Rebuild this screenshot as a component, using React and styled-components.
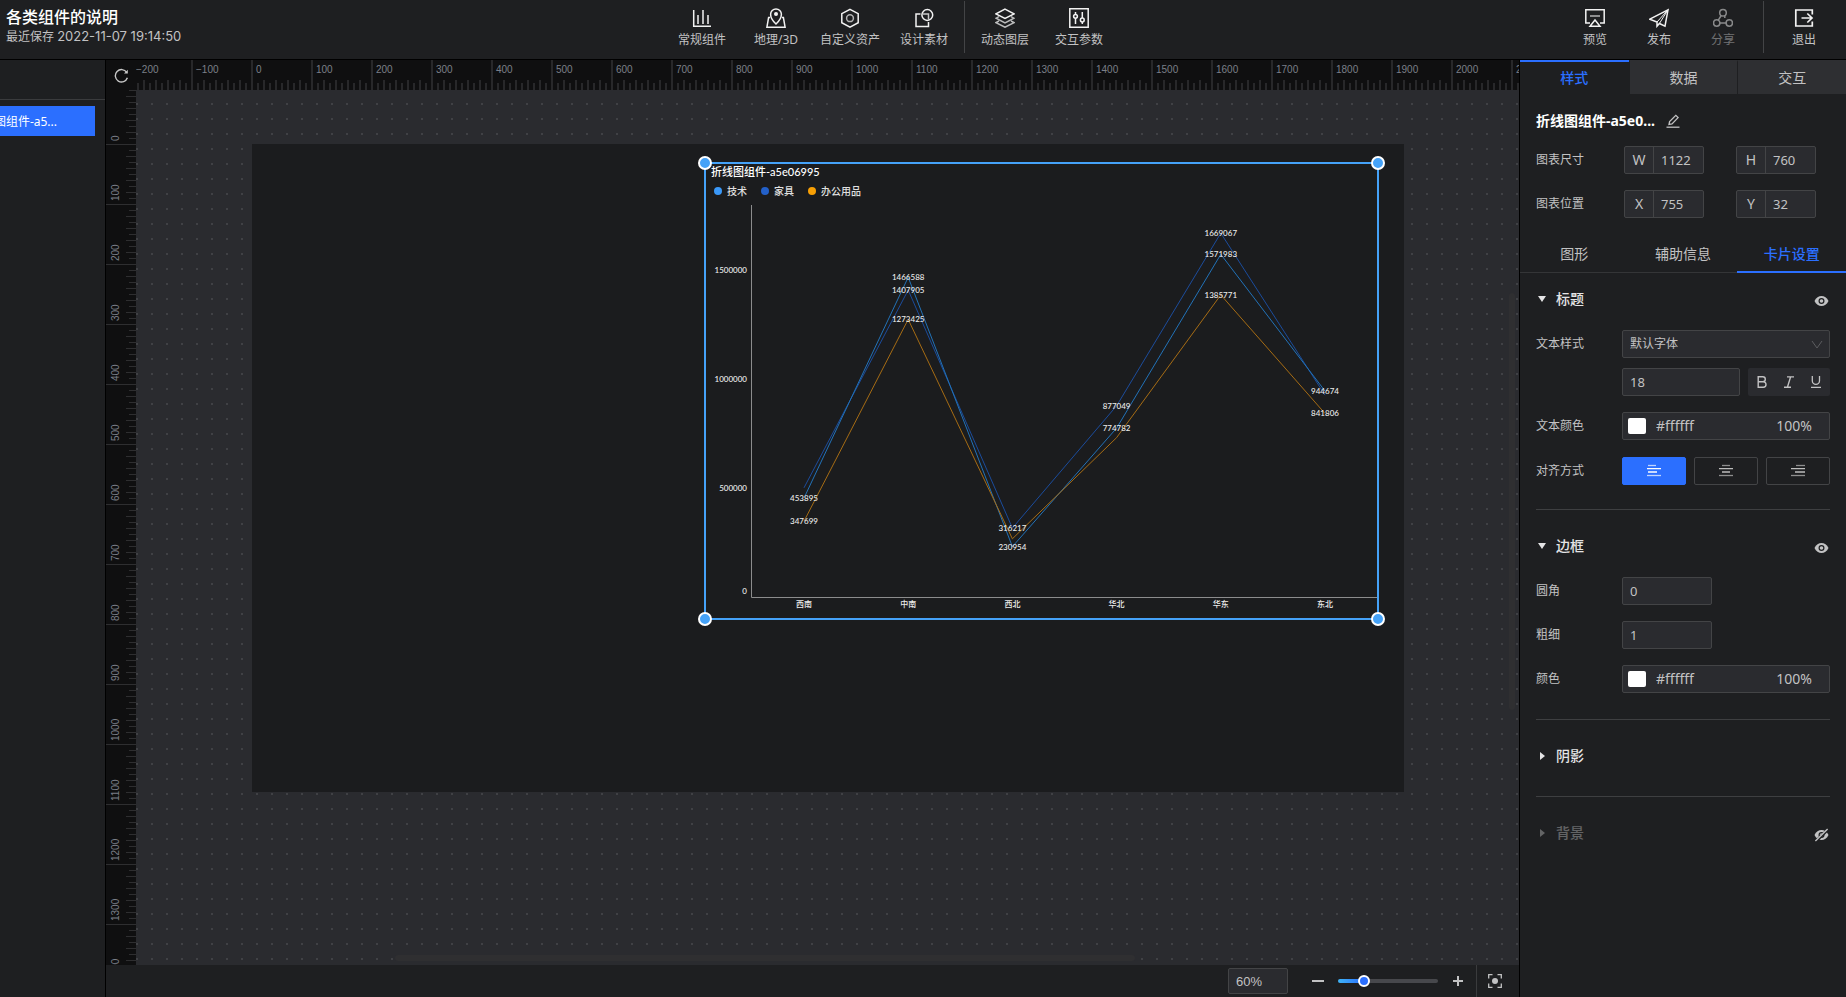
import React, { useEffect, useState } from 'react';
import styled, { createGlobalStyle, css } from 'styled-components';

const c = {
  panel: '#1e1f21',
  board: '#1b1c1e',
  canvas: '#2a2b2f',
  field: '#2a2b2f',
  ruler: '#0f0f10',
  tick: '#28282a',
  line: '#434446',
  text: '#c2c2c3',
  strong: '#e4e4e5',
  blue: '#2b6fff',
  select: '#45a2f8',
};

const GlobalStyle = createGlobalStyle`
  * { box-sizing: border-box; }
  body { margin: 0; background: ${c.panel}; color: ${c.text}; font: 12px/16px "Noto Sans", "Noto Sans CJK SC", sans-serif; }
  button, input, select { font: inherit; color: inherit; margin: 0; }
  button { background: none; border: 0; padding: 0; cursor: pointer; }
  svg { display: block; }
`;

const Page = styled.div`
  display: flex;
  flex-direction: column;
  height: 100vh;
  overflow: hidden;
`;

/* ---------- header ---------- */
const Header = styled.header`
  display: flex;
  justify-content: space-between;
  flex: none;
  height: 60px;
  padding-right: 10px;
  border-bottom: 1px solid #000;
`;
const Project = styled.div`
  width: 218px;
  padding: 7px 0 0 6px;
  white-space: nowrap;
`;
const ProjectName = styled.h1`
  margin: 0;
  font-size: 16px;
  line-height: 20px;
  font-weight: 500;
  color: #fff;
`;
const Saved = styled.p`
  margin: 0;
  line-height: 18px;
  time {
    font-family: Inter, sans-serif;
    font-size: 13px;
  }
`;
const Tools = styled.nav`
  display: flex;
  padding-top: 1px;
`;
const ToolButton = styled.button`
  display: flex;
  flex-direction: column;
  align-items: center;
  gap: 4px;
  width: ${(p) => p.$width}px;
  padding-top: 7px;
  opacity: ${(p) => (p.disabled ? 0.5 : 1)};
  white-space: nowrap;
  svg { color: #f2f2f2; }
`;
const Separator = styled.span`
  width: 1px;
  height: 52px;
  margin: 0 ${(p) => p.$gap}px;
  background: ${c.line};
`;

/* ---------- body ---------- */
const Body = styled.div`
  display: flex;
  flex: 1;
  min-height: 0;
`;
const Layers = styled.aside`
  flex: none;
  width: 106px;
  border-right: 1px solid #000;
`;
const LayersHead = styled.div`
  height: 40px;
  border-bottom: 1px solid #3a3b3d;
`;
const LayerItem = styled.button`
  display: flex;
  align-items: center;
  justify-content: flex-end;
  width: 95px;
  height: 30px;
  margin-top: 6px;
  padding: 2px 38px 0 0;
  overflow: hidden;
  background: ${c.blue};
  color: #fff;
  white-space: nowrap;
`;
const Editor = styled.main`
  display: grid;
  flex: 1;
  grid-template: 30px minmax(0, 1fr) 32px / 30px minmax(0, 1fr);
  min-width: 0;
`;
const Reset = styled.button`
  display: grid;
  place-items: center;
  background: ${c.ruler};
  color: #c8c8c8;
`;
const TopRuler = styled.div`
  overflow: hidden;
  background: ${c.ruler};
`;
const TopScale = styled.div`
  display: flex;
  margin-left: -5px;
`;
const TopCell = styled.span`
  flex: none;
  width: 60px;
  height: 30px;
  padding: 4px 0 0 3px;
  border-left: 2px solid ${c.tick};
  background:
    repeating-linear-gradient(90deg, transparent 0 10px, ${c.tick} 10px 12px) 0 100% / 100% 10px no-repeat,
    repeating-linear-gradient(90deg, transparent 0 4px, ${c.tick} 4px 6px, transparent 6px 12px) 0 100% / 100% 7px no-repeat;
  color: #7b7f88;
  font: 10px/12px "Liberation Sans", sans-serif;
`;
const SideRuler = styled.div`
  overflow: hidden;
  background: ${c.ruler};
`;
const SideScale = styled.div`
  display: flex;
  flex-direction: column;
  margin-top: -5px;
`;
const SideCell = styled.span`
  flex: none;
  width: 30px;
  height: 60px;
  padding: 3px 4px 0 0;
  writing-mode: vertical-rl;
  transform: rotate(180deg);
  border-top: 1px solid #2e2e30;
  background:
    repeating-linear-gradient(180deg, transparent 0 11px, #2e2e30 11px 12px) 0 0 / 10px 100% no-repeat,
    repeating-linear-gradient(180deg, transparent 0 5px, #2e2e30 5px 6px) 0 0 / 7px 100% no-repeat;
  color: #7b7f88;
  font: 10px/12px "Liberation Sans", sans-serif;
`;
const Workspace = styled.div`
  position: relative;
  overflow: hidden;
  background:
    linear-gradient(90deg, transparent 2px, ${c.canvas} 2px) 0 13px / 15px 15px,
    linear-gradient(#404145 2px, ${c.canvas} 2px) 0 13px / 15px 15px;
`;
const Board = styled.div`
  position: absolute;
  left: 116px;
  top: 54px;
  width: 1152px;
  height: 648px;
  background: ${c.board};
`;
const Widget = styled.section`
  position: absolute;
  left: 452px;
  top: 18px;
  width: 675px;
  height: 458px;
  border: 2px solid ${c.select};
`;
const Handle = styled.i`
  position: absolute;
  width: 14px;
  height: 14px;
  border: 2px solid #fff;
  border-radius: 50%;
  background: ${c.select};
  ${(p) => p.$y}: -8px;
  ${(p) => p.$x}: -8px;
`;
const ChartHead = styled.div`
  position: absolute;
  left: 5px;
  top: 0;
  font-family: Lato, "Noto Sans CJK SC", sans-serif;
`;
const ChartTitle = styled.h2`
  margin: 0;
  font-size: 11px;
  line-height: 16px;
  font-weight: 500;
  color: #fff;
`;
const Legend = styled.ul`
  display: flex;
  gap: 14px;
  margin: 4px 0 0;
  padding: 0 0 0 3px;
  list-style: none;
  font-size: 10px;
  line-height: 14px;
  font-weight: 500;
  color: #e0e0e0;
`;
const LegendItem = styled.li`
  display: flex;
  align-items: center;
  gap: 5px;
  &::before {
    content: '';
    width: 8px;
    height: 8px;
    border-radius: 50%;
    background: ${(p) => p.$color};
  }
`;
const Plot = styled.svg`
  width: 100%;
  height: 100%;
  overflow: visible;
  text {
    fill: #ececec;
    font: 500 8px Lato, "Noto Sans CJK SC", sans-serif;
    dominant-baseline: central;
  }
`;
const Thumb = styled.i`
  position: absolute;
  border-radius: 3px;
  background: #2f2f31;
  ${(p) => (p.$vertical
    ? css`right: 4px; top: 203px; width: 6px; height: 417px;`
    : css`left: 259px; bottom: 4px; width: 740px; height: 6px;`)}
`;
const Footer = styled.footer`
  grid-column: 1 / -1;
  display: flex;
  align-items: center;
  justify-content: flex-end;
  background: ${c.panel};
`;
const fieldBox = css`
  height: 28px;
  border: 1px solid ${c.line};
  border-radius: 2px;
  background: ${c.field};
`;
const ZoomInput = styled.input`
  ${fieldBox}
  width: 60px;
  height: 26px;
  margin-right: 12px;
  padding: 0 7px;
  font: 13px/16px "Liberation Sans", sans-serif;
`;
const FootButton = styled.button`
  display: grid;
  place-items: center;
  width: ${(p) => (p.$last ? 43 : 36)}px;
  height: 32px;
  padding-right: ${(p) => (p.$last ? 6 : 0)}px;
  border-left: ${(p) => (p.$last ? `1px solid #3a3b3d` : 0)};
`;
const Slider = styled.input`
  appearance: none;
  width: 100px;
  height: 4px;
  margin: 0 2px;
  border-radius: 2px;
  background: linear-gradient(90deg, #3fb4f6, ${c.blue} 26px, #47484c 26px);
  &::-webkit-slider-thumb {
    appearance: none;
    width: 12px;
    height: 12px;
    border: 2px solid #fff;
    border-radius: 50%;
    background: ${c.blue};
  }
`;

/* ---------- inspector ---------- */
const Inspector = styled.aside`
  flex: none;
  width: 327px;
  border-left: 1px solid #000;
  background: ${c.panel};
`;
const Tabs = styled.div`
  display: grid;
  grid-template-columns: repeat(3, 1fr);
`;
const MainTab = styled.button`
  height: 34px;
  border-top: 2px solid ${(p) => (p.$on ? c.blue : '#2e2f32')};
  border-left: ${(p) => (p.$on ? 0 : `1px solid ${c.panel}`)};
  background: ${(p) => (p.$on ? 'none' : '#2e2f32')};
  color: ${(p) => (p.$on ? c.blue : c.text)};
  font-size: 14px;
  font-weight: ${(p) => (p.$on ? 500 : 400)};
`;
const SubTabs = styled(Tabs)`
  margin-top: 18px;
  box-shadow: inset 0 -1px #343537;
`;
const SubTab = styled.button`
  height: 37px;
  border-bottom: 2px solid ${(p) => (p.$on ? c.blue : 'transparent')};
  color: ${(p) => (p.$on ? c.blue : c.text)};
  font-size: 14px;
  font-weight: ${(p) => (p.$on ? 500 : 400)};
`;
const Summary = styled.div`
  display: flex;
  flex-direction: column;
  gap: 16px;
  padding: 18px 16px 0;
`;
const NameRow = styled.div`
  display: flex;
  align-items: center;
  gap: 11px;
  height: 18px;
`;
const WidgetName = styled.h2`
  margin: 0;
  font-size: 14px;
  line-height: 20px;
  font-weight: 700;
  color: #fff;
`;
const PairRow = styled.div`
  display: grid;
  grid-template-columns: 88px 80px 80px;
  align-items: center;
  &> :last-child { margin-left: 32px; margin-right: -32px; }
`;
const PairField = styled.label`
  ${fieldBox}
  display: flex;
  span {
    width: 29px;
    border-right: 1px solid ${c.line};
    font-size: 14px;
    line-height: 26px;
    text-align: center;
  }
  input {
    flex: 1;
    min-width: 0;
    padding: 0 7px;
    border: 0;
    background: none;
    font-size: 13px;
  }
`;
const Section = styled.section`
  margin: 0 16px;
  padding: ${(p) => (p.$first ? 16 : 26)}px 0 ${(p) => p.$end}px;
  &:not(:last-child) { border-bottom: 1px solid #3e3f41; }
`;
const SectionHead = styled.div`
  display: flex;
  justify-content: space-between;
  align-items: flex-end;
  height: 20px;
`;
const Fold = styled.button`
  display: flex;
  align-items: center;
  gap: 8px;
  color: ${c.strong};
  font-size: 14px;
  line-height: 20px;
  font-weight: 500;
  opacity: ${(p) => (p.$dim ? 0.35 : 1)};
`;
const Rows = styled.div`
  display: flex;
  flex-direction: column;
  gap: 16px;
  padding-top: 21px;
`;
const Row = styled.div`
  display: grid;
  grid-template-columns: 86px minmax(0, 1fr);
  row-gap: 10px;
  align-items: center;
  min-height: ${(p) => (p.$tall ? 30 : 28)}px;
`;
const SelectWrap = styled.div`
  position: relative;
  svg { position: absolute; right: 7px; top: 9px; color: #5c5d60; pointer-events: none; }
`;
const Select = styled.select`
  ${fieldBox}
  appearance: none;
  display: block;
  width: 100%;
  padding: 0 7px;
`;
const TextInput = styled.input`
  ${fieldBox}
  width: ${(p) => (p.$fill ? 'auto' : '90px')};
  flex: ${(p) => (p.$fill ? 1 : 'none')};
  min-width: 0;
  padding: 0 7px;
  font-size: 13px;
`;
const FontRow = styled.div`
  grid-column: 2;
  display: flex;
  gap: 8px;
`;
const StyleGroup = styled.div`
  display: grid;
  grid-template-columns: repeat(3, 1fr);
  width: 82px;
  height: 28px;
  border-radius: 2px;
  background: ${c.field};
  button { display: grid; place-items: center; }
`;
const ColorField = styled.div`
  ${fieldBox}
  display: flex;
  align-items: center;
  gap: 10px;
  padding: 0 17px 0 5px;
  input {
    min-width: 0;
    padding: 0;
    border: 0;
    background: none;
    font-size: 14px;
    &:nth-of-type(1) { flex: 1; }
    &:nth-of-type(2) { width: 60px; text-align: right; }
  }
`;
const Swatch = styled.button`
  width: 18px;
  height: 16px;
  border-radius: 2px;
  background: #fff;
`;
const AlignGroup = styled.div`
  display: grid;
  grid-template-columns: repeat(3, 1fr);
  gap: 8px;
`;
const AlignButton = styled.button`
  display: grid;
  place-items: center;
  height: 28px;
  border: 1px solid ${(p) => (p.$on ? c.blue : c.line)};
  border-radius: 2px;
  background: ${(p) => (p.$on ? c.blue : 'none')};
  color: ${(p) => (p.$on ? '#fff' : '#bdbdbd')};
`;

/* ---------- icons ---------- */
const Icon = ({ size = 20, box = size, w = 1.5, children }) => (
  <svg width={size} height={size} viewBox={`0 0 ${box} ${box}`} fill="none" stroke="currentColor" strokeWidth={w} aria-hidden="true">
    {children}
  </svg>
);
const icons = {
  bars: <Icon><path d="M1.700 2v16.300H19" /><path d="M6 7v9M11 2v14M16 7v9" /></Icon>,
  map: <Icon><path d="M4 9.500H2.600L.9 19.200h18.200L17.400 9.500H16" /><path d="M10 16C6 12.400 4.600 9.700 4.600 6.300a5.400 5.400 0 0 1 10.800 0C15.400 9.700 14 12.400 10 16z" /><circle cx="10" cy="6" r="2" fill="currentColor" stroke="none" /></Icon>,
  hex: <Icon><path d="M10 1.300l8.200 4.400v9L10 19.100l-8.200-4.400v-9z" /><circle cx="10" cy="10.200" r="3.400" opacity=".7" /></Icon>,
  shapes: <Icon><path d="M6.500 6H2v12.500h12.500V14" /><circle cx="13.300" cy="7" r="5.400" /><path d="M9 6h5.500v5.500" opacity=".8" /></Icon>,
  layers: <Icon><path d="M10 1.200l9 4.600-9 4.600-9-4.600z" /><path d="M4 8.600l-3 1.600 9 4.600 9-4.600-3-1.600M4 13l-3 1.600 9 4.600 9-4.600-3-1.600" opacity=".75" /></Icon>,
  params: <Icon><path d="M.8.8h18.400v18.400H.8z" /><circle cx="6.500" cy="8.300" r="1.900" /><circle cx="13.300" cy="12" r="1.900" /><path d="M6.500 4v2.400M6.500 10.200V16M13.300 4v6.100M13.300 13.900V16" /></Icon>,
  preview: <Icon><path d="M5 15H.8V1.800h18.400V15H15" /><path d="M5 8h10" opacity=".7" /><path d="M10 12l5 6.300H5z" /></Icon>,
  send: <Icon><path d="M.8 11.200L19 1.800l-3 16.400-5.600-2.700-2.400 2.700V14z" /><path d="M19 1.800L8 14M19 1.800l-8.600 13.700" strokeWidth="1" /></Icon>,
  share: <Icon><circle cx="10" cy="4.700" r="3.300" /><circle cx="3.700" cy="15" r="3.200" /><circle cx="16.300" cy="15" r="3.200" /><path d="M8.200 7.500L5.300 12.200M11.800 7.500v2.500M7 15h6" /></Icon>,
  exit: <Icon w={1.7}><path d="M18.300 6.500V2H1.800v16h16.500v-4.500" /><path d="M7.500 10H18M13.300 5.500L18 10l-4.700 4.500" /></Icon>,
};
const ResetIcon = () => <Icon size={15} w={1.4}><path d="M12.700 4.300A6.200 6.200 0 1 0 13.400 9.800" /><path d="M13.800 1.800v3.700H10z" fill="currentColor" stroke="none" /></Icon>;
const PenIcon = () => <Icon size={14} w={1.3}><path d="M.5 13.200h13" /><path d="M3 10.500l.6-3L9.800 1.300l2.300 2.300L6 9.900z" /></Icon>;
const EyeIcon = ({ off }) => (
  <Icon size={16} box={16} w={1.2}>
    <path d="M.5 8C3.500 1.300 11.500 1.300 14.500 8c-3 6.700-11 6.700-14 0z" fill="currentColor" stroke="none" />
    <circle cx="7.500" cy="8" r="2.400" stroke={c.panel} />
    {off && <><path d="M1.200 15L14.200 2.300" stroke={c.panel} strokeWidth="3" /><path d="M1.400 13.900L13.600 2.100" strokeWidth="1.400" /></>}
  </Icon>
);
const Caret = ({ open }) => (
  <Icon size={12}><path d={open ? 'M2 3h8L6 9z' : 'M4 2v8l5-4z'} fill="currentColor" stroke="none" /></Icon>
);
const alignLines = {
  left: ['M1 1.500h8', 'M0 4.700h14M1 8h9', 'M0 11.500h14'],
  center: ['M3 1.500h8', 'M0 4.700h14M3 8h8', 'M0 11.500h14'],
  right: ['M5 1.500h9', 'M0 4.700h14M4 8h10', 'M0 11.500h14'],
};
const AlignIcon = ({ side }) => (
  <Icon size={14} w={1.3}>
    <path d={alignLines[side][0]} opacity=".7" /><path d={alignLines[side][1]} /><path d={alignLines[side][2]} opacity=".7" />
  </Icon>
);

/* ---------- data ---------- */
const series = [
  { name: '家具', color: '#2360c9', line: '#1b4c9c', values: [501000, 1407905, 316217, 877049, 1669067, 926000], labels: [0, 1, 1, 1, 1, 0] },
  { name: '技术', color: '#3a98f8', line: '#2272b8', values: [453895, 1466588, 230954, 774782, 1571983, 944674], labels: [1, 1, 1, 1, 1, 1] },
  { name: '办公用品', color: '#f79f05', line: '#a66c14', values: [347699, 1273425, 267000, 731000, 1385771, 841806], labels: [1, 1, 0, 0, 1, 1] },
];
const regions = ['西南', '中南', '西北', '华北', '华东', '东北'];
const px = (i) => 98 + i * 104.2;
const py = (v) => 433 - (v / 500000) * 109;

function Chart() {
  return (
    <>
      <Plot viewBox="0 0 671 454" role="img" aria-label="折线图">
        <path d="M45.500 41V433.500H671" fill="none" stroke="#8c8c8d" />
        {[500000, 1000000, 1500000].map((v) => <text key={v} x="41" y={py(v)} textAnchor="end">{v}</text>)}
        <text x="41" y="427" textAnchor="end">0</text>
        {regions.map((r, i) => <text key={r} x={px(i)} y="440" textAnchor="middle">{r}</text>)}
        {series.map((s) => (
          <polyline key={s.name} points={s.values.map((v, i) => `${px(i)},${py(v)}`).join(' ')} fill="none" stroke={s.line} strokeWidth="1" />
        ))}
        {series.map((s) => s.values.map((v, i) => s.labels[i] ? (
          <text key={v} x={px(i)} y={py(v)} textAnchor="middle">{v}</text>
        ) : null))}
      </Plot>
      <ChartHead>
        <ChartTitle>折线图组件-a5e06995</ChartTitle>
        <Legend>
          {[series[1], series[0], series[2]].map((s) => <LegendItem key={s.name} $color={s.color}>{s.name}</LegendItem>)}
        </Legend>
      </ChartHead>
    </>
  );
}

const Tool = ({ icon, label, width = 74, disabled }) => (
  <ToolButton $width={width} disabled={disabled}>{icons[icon]}{label}</ToolButton>
);
const Pair = ({ name, value }) => (
  <PairField><span>{name}</span><input defaultValue={value} /></PairField>
);
const Color = ({ id }) => (
  <ColorField>
    <Swatch aria-label="选择颜色" />
    <input id={id} defaultValue="#ffffff" />
    <input aria-label="不透明度" defaultValue="100%" />
  </ColorField>
);
const Group = ({ title, first, open, eye, dim, end = 30, children }) => (
  <Section $first={first} $end={end}>
    <SectionHead>
      <Fold $dim={dim} aria-expanded={!!open}><Caret open={open} />{title}</Fold>
      {eye && <button aria-label="显示或隐藏"><EyeIcon off={eye === 'off'} /></button>}
    </SectionHead>
    {open && <Rows>{children}</Rows>}
  </Section>
);

/* Ruler labels, one per 100 canvas units; only as many as the window can show. */
const marks = (from, count) => Array.from({ length: count }, (_, i) => String(from + i * 100).replace('-', '−'));
function useRulerCounts() {
  const read = () => [Math.ceil((window.innerWidth - 458) / 60), Math.ceil((window.innerHeight - 117) / 60)];
  const [counts, setCounts] = useState(read);
  useEffect(() => {
    const update = () => setCounts(read());
    window.addEventListener('resize', update);
    return () => window.removeEventListener('resize', update);
  }, []);
  return counts;
}

export default function App() {
  const [align, setAlign] = useState('left');
  const [across, down] = useRulerCounts();
  return (
    <Page>
      <GlobalStyle />
      <Header>
        <Project>
          <ProjectName>各类组件的说明</ProjectName>
          <Saved>最近保存 <time>2022-11-07 19:14:50</time></Saved>
        </Project>
        <Tools>
          <Tool icon="bars" label="常规组件" />
          <Tool icon="map" label="地理/3D" />
          <Tool icon="hex" label="自定义资产" />
          <Tool icon="shapes" label="设计素材" />
          <Separator $gap={3} />
          <Tool icon="layers" label="动态图层" />
          <Tool icon="params" label="交互参数" />
        </Tools>
        <Tools>
          <Tool icon="preview" label="预览" width={64} />
          <Tool icon="send" label="发布" width={64} />
          <Tool icon="share" label="分享" width={64} disabled />
          <Separator $gap={8} />
          <Tool icon="exit" label="退出" width={64} />
        </Tools>
      </Header>
      <Body>
        <Layers>
          <LayersHead />
          <LayerItem>折线图组件-a5...</LayerItem>
        </Layers>
        <Editor>
          <Reset aria-label="重置"><ResetIcon /></Reset>
          <TopRuler><TopScale>{marks(-200, across).map((m) => <TopCell key={m}>{m}</TopCell>)}</TopScale></TopRuler>
          <SideRuler><SideScale>{marks(0, down).map((m) => <SideCell key={m}>{m}</SideCell>)}</SideScale></SideRuler>
          <Workspace>
            <Board>
              <Widget>
                <Chart />
                <Handle $x="left" $y="top" />
                <Handle $x="right" $y="top" />
                <Handle $x="left" $y="bottom" />
                <Handle $x="right" $y="bottom" />
              </Widget>
            </Board>
            <Thumb $vertical />
            <Thumb />
          </Workspace>
          <Footer>
            <ZoomInput aria-label="缩放" defaultValue="60%" />
            <FootButton aria-label="缩小"><Icon size={12} w={2}><path d="M0 6h12" /></Icon></FootButton>
            <Slider type="range" aria-label="缩放比例" min="0" max="100" defaultValue="23" />
            <FootButton aria-label="放大"><Icon size={12} w={2}><path d="M1 6h10M6 1v10" /></Icon></FootButton>
            <FootButton $last aria-label="适应画布">
              <Icon size={14} w={1.3}><path d="M.7 4.500V.7h3.800M9.500.7h3.800v3.800M13.300 9.500v3.800H9.500M4.500 13.300H.7V9.500" /><circle cx="7" cy="7" r="3" fill="currentColor" stroke="none" /></Icon>
            </FootButton>
          </Footer>
        </Editor>
        <Inspector>
          <Tabs>
            <MainTab $on>样式</MainTab>
            <MainTab>数据</MainTab>
            <MainTab>交互</MainTab>
          </Tabs>
          <Summary>
            <NameRow>
              <WidgetName>折线图组件-a5e0...</WidgetName>
              <button aria-label="重命名"><PenIcon /></button>
            </NameRow>
            <PairRow><span>图表尺寸</span><Pair name="W" value="1122" /><Pair name="H" value="760" /></PairRow>
            <PairRow><span>图表位置</span><Pair name="X" value="755" /><Pair name="Y" value="32" /></PairRow>
          </Summary>
          <SubTabs>
            <SubTab>图形</SubTab>
            <SubTab>辅助信息</SubTab>
            <SubTab $on>卡片设置</SubTab>
          </SubTabs>
          <Group title="标题" first open eye="on" end={23}>
            <Row>
              <label htmlFor="font">文本样式</label>
              <SelectWrap>
                <Select id="font"><option>默认字体</option></Select>
                <Icon size={12} w={1}><path d="M1 2l5 7 5-7" /></Icon>
              </SelectWrap>
              <FontRow>
                <TextInput $fill aria-label="字号" defaultValue="18" />
                <StyleGroup>
                  <button aria-label="加粗"><Icon size={12} w={1.4}><path d="M2.200.8h4.600a2.500 2.500 0 0 1 0 5H2.200zM2.200 5.800h5.100a2.700 2.700 0 0 1 0 5.400H2.200z" /></Icon></button>
                  <button aria-label="斜体"><Icon size={12} w={1.4}><path d="M4 .9h7M1 11.200h7M7.600.9L4.400 11.200" /></Icon></button>
                  <button aria-label="下划线"><Icon size={12} w={1.3}><path d="M2.300 0v4.700a3.600 3.600 0 0 0 7.200 0V0M1 11.300h10" /></Icon></button>
                </StyleGroup>
              </FontRow>
            </Row>
            <Row><label htmlFor="text-color">文本颜色</label><Color id="text-color" /></Row>
            <Row $tall>
              <span>对齐方式</span>
              <AlignGroup>
                {['left', 'center', 'right'].map((a) => (
                  <AlignButton key={a} $on={align === a} onClick={() => setAlign(a)} aria-label={a}><AlignIcon side={a} /></AlignButton>
                ))}
              </AlignGroup>
            </Row>
          </Group>
          <Group title="边框" open eye="on" end={26}>
            <Row><label htmlFor="radius">圆角</label><TextInput id="radius" defaultValue="0" /></Row>
            <Row><label htmlFor="weight">粗细</label><TextInput id="weight" defaultValue="1" /></Row>
            <Row><label htmlFor="border-color">颜色</label><Color id="border-color" /></Row>
          </Group>
          <Group title="阴影" />
          <Group title="背景" eye="off" dim />
        </Inspector>
      </Body>
    </Page>
  );
}
